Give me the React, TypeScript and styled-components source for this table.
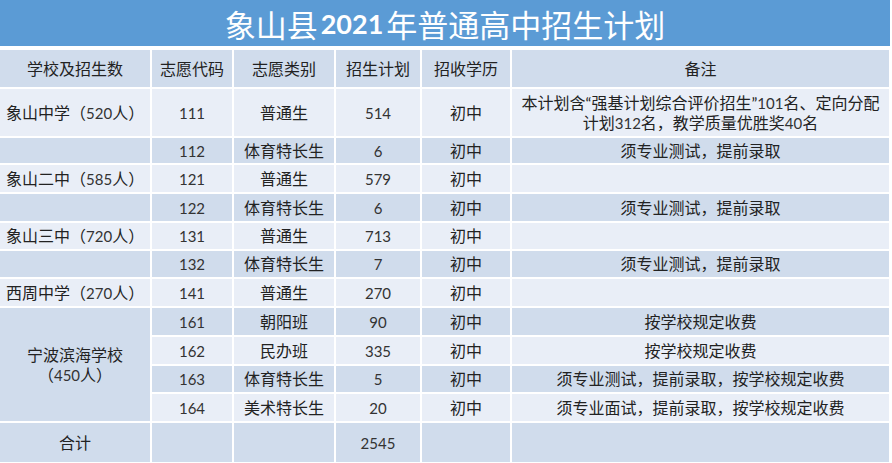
import styled, { createGlobalStyle } from "styled-components";

const GlobalStyle = createGlobalStyle`
  html, body {
    margin: 0;
    padding: 0;
    background: #fff;
  }
  body {
    font-family: "Lato", "Noto Sans CJK SC", sans-serif;
  }
`;

const Page = styled.div`
  width: 892px;
  height: 463px;
  overflow: hidden;
  background: #fff;
`;

const TitleBar = styled.div`
  height: 46px;
  margin: 0 2px 2px 0;
  background: #5b9bd5;
  display: flex;
  align-items: center;
  justify-content: center;
  color: #fff;
  font-family: "Noto Sans CJK SC", sans-serif;
  font-size: 31px;
  line-height: 1;
  padding-top: 1px;
  box-sizing: border-box;
`;

const Year = styled.span`
  font-family: "Lato", sans-serif;
  font-weight: 700;
  font-size: 27px;
  margin: 0 3px;
`;

const Table = styled.table`
  width: 893px;
  margin-left: -2px;
  border-collapse: separate;
  border-spacing: 2px;
  table-layout: fixed;
  background: #fff;
  font-size: 16px;
  color: #222;
`;

const Cell = styled.td<{ $tone: "light" | "dark"; $align?: "left" | "center"; $h?: number }>`
  background: ${p => (p.$tone === "dark" ? "#d0dcec" : "#e9eef7")};
  text-align: ${p => p.$align || "center"};
  height: ${p => (p.$h ? `${p.$h}px` : "auto")};
  padding: 0 ${p => (p.$align === "left" ? "6px" : "2px")};
  line-height: 20px;
  font-weight: 400;
  vertical-align: middle;
  white-space: nowrap;
  overflow: hidden;
`;

const Num = styled.span`
  font-family: "Lato", sans-serif;
  font-size: 15px;
  color: #333;
`;

type Row = {
  school?: string;
  code: string;
  kind: string;
  plan: string;
  note: string;
  h: number;
};

const rows: Row[] = [
  { school: "象山中学（520人）", code: "111", kind: "普通生", plan: "514", note: "", h: 47 },
  { school: "", code: "112", kind: "体育特长生", plan: "6", note: "须专业测试，提前录取", h: 25 },
  { school: "象山二中（585人）", code: "121", kind: "普通生", plan: "579", note: "", h: 27 },
  { school: "", code: "122", kind: "体育特长生", plan: "6", note: "须专业测试，提前录取", h: 27 },
  { school: "象山三中（720人）", code: "131", kind: "普通生", plan: "713", note: "", h: 26 },
  { school: "", code: "132", kind: "体育特长生", plan: "7", note: "须专业测试，提前录取", h: 26 },
  { school: "西周中学（270人）", code: "141", kind: "普通生", plan: "270", note: "", h: 27 },
  { code: "161", kind: "朝阳班", plan: "90", note: "按学校规定收费", h: 27 },
  { code: "162", kind: "民办班", plan: "335", note: "按学校规定收费", h: 27 },
  { code: "163", kind: "体育特长生", plan: "5", note: "须专业测试，提前录取，按学校规定收费", h: 26 },
  { code: "164", kind: "美术特长生", plan: "20", note: "须专业面试，提前录取，按学校规定收费", h: 27 },
];

const headers = ["学校及招生数", "志愿代码", "志愿类别", "招生计划", "招收学历", "备注"];

const renderText = (text: string) => {
  const parts = text.split(/(\d+)/);
  return parts.map((p, i) => (/^\d+$/.test(p) ? <Num key={i}>{p}</Num> : <span key={i}>{p}</span>));
};

const App = () => {
  return (
    <Page>
      <GlobalStyle />
      <TitleBar>
        象山县<Year>2021</Year>年普通高中招生计划
      </TitleBar>
      <Table>
        <colgroup>
          <col style={{ width: 150 }} />
          <col style={{ width: 80 }} />
          <col style={{ width: 100 }} />
          <col style={{ width: 84 }} />
          <col style={{ width: 88 }} />
          <col />
        </colgroup>
        <thead>
          <tr>
            {headers.map(h => (
              <Cell as="th" key={h} $tone="dark" $h={37}>
                {h}
              </Cell>
            ))}
          </tr>
        </thead>
        <tbody>
          {rows.map((r, i) => {
            const tone = i % 2 === 0 ? "light" : "dark";
            return (
              <tr key={r.code}>
                {r.school !== undefined && (
                  <Cell $tone={tone} $align="left" $h={r.h}>
                    {renderText(r.school)}
                  </Cell>
                )}
                {r.code === "161" && (
                  <Cell $tone="dark" rowSpan={4}>
                    宁波滨海学校
                    <br />
                    （<Num>450</Num>人）
                  </Cell>
                )}
                <Cell $tone={tone} $h={r.h}>
                  <Num>{r.code}</Num>
                </Cell>
                <Cell $tone={tone}>{r.kind}</Cell>
                <Cell $tone={tone}>
                  <Num>{r.plan}</Num>
                </Cell>
                <Cell $tone={tone}>初中</Cell>
                <Cell $tone={tone}>
                  {i === 0 ? (
                    <>
                      本计划含“强基计划综合评价招生”<Num>101</Num>名、定向分配
                      <br />
                      计划<Num>312</Num>名，教学质量优胜奖<Num>40</Num>名
                    </>
                  ) : (
                    renderText(r.note)
                  )}
                </Cell>
              </tr>
            );
          })}
          <tr>
            <Cell $tone="dark" $h={39}>
              合计
            </Cell>
            <Cell $tone="dark" />
            <Cell $tone="dark" />
            <Cell $tone="dark">
              <Num>2545</Num>
            </Cell>
            <Cell $tone="dark" />
            <Cell $tone="dark" />
          </tr>
        </tbody>
      </Table>
    </Page>
  );
};

export default App;
